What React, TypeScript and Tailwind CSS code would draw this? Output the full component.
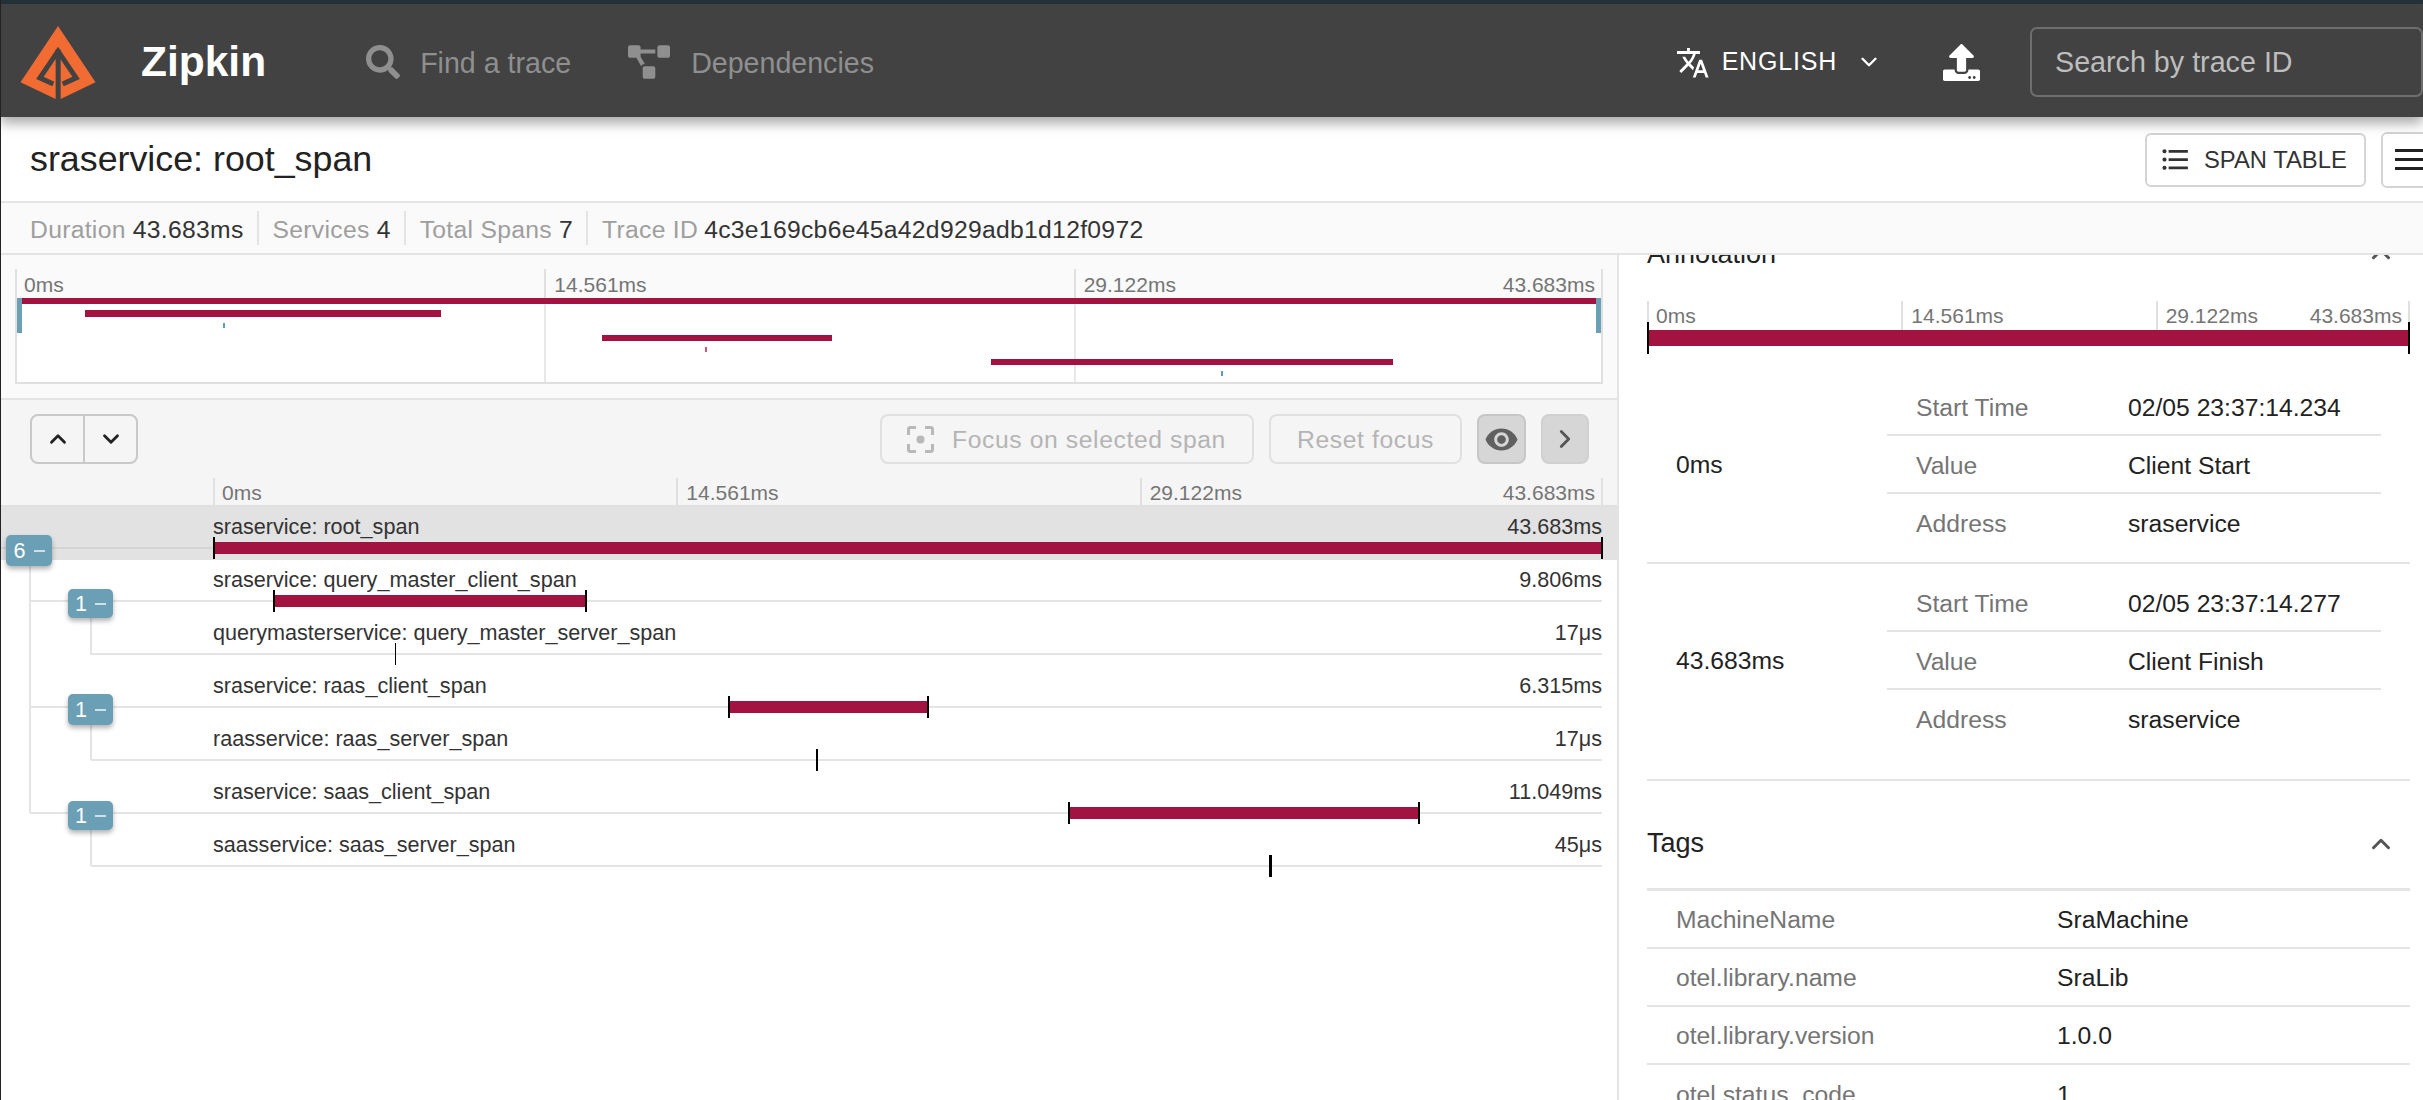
import React from "react";
import { FaSearch, FaProjectDiagram, FaUpload } from "react-icons/fa";
import { ChevronUp, ChevronDown, ChevronRight } from "lucide-react";

const Logo = () => (
  <svg width="76" height="73" viewBox="30 30 224 218" className="block">
    <polygon points="142,30 254,198 150,248 135,248 30,198" fill="#f26b32" />
    <polyline points="128,203 88,185 142,105 196,185 156,203" fill="none" stroke="#424242" strokeWidth="15" strokeMiterlimit="10" />
    <rect x="135" y="100" width="15" height="150" fill="#424242" />
  </svg>
);

const Translate = () => (
  <svg width="36" height="36" viewBox="1 2 23 21" fill="#fff" preserveAspectRatio="none" className="mt-[2px] h-[31px] w-[33px]">
    <path d="M12.87 15.07l-2.54-2.51.03-.03c1.74-1.94 2.98-4.17 3.71-6.53H17V4h-7V2H8v2H1v1.99h11.17C11.5 7.92 10.44 9.75 9 11.35 8.07 10.32 7.3 9.19 6.69 8h-2c.73 1.63 1.73 3.17 2.98 4.56l-5.09 5.02L4 19l5-5 3.11 3.11.76-2.04zM18.5 10h-2L12 22h2l1.12-3h4.75L21 22h2l-4.5-12zm-2.62 7l1.62-4.33L19.12 17h-3.24z" />
  </svg>
);

const ListIcon = () => (
  <svg viewBox="0 0 24 24" fill="#333" className="h-[33px] w-[33px]">
    <path d="M4 10.5c-.83 0-1.5.67-1.5 1.5s.67 1.5 1.5 1.5 1.5-.67 1.5-1.5-.67-1.5-1.5-1.5zm0-6c-.83 0-1.5.67-1.5 1.5S3.17 7.5 4 7.5 5.5 6.83 5.5 6 4.83 4.5 4 4.5zm0 12c-.83 0-1.5.68-1.5 1.5s.68 1.5 1.5 1.5 1.5-.68 1.5-1.5-.67-1.5-1.5-1.5zM7 19h14v-2H7v2zm0-6h14v-2H7v2zm0-8v2h14V5H7z" />
  </svg>
);

const FocusIcon = () => (
  <svg viewBox="3 3 18 18" fill="#b8b8b8" className="h-[27px] w-[27px]">
    <path d="M12 9.3a2.7 2.7 0 1 0 0 5.4 2.7 2.7 0 0 0 0-5.4zm-7 5.7H3v4c0 1.1.9 2 2 2h4v-2H5v-4zM5 5h4V3H5c-1.1 0-2 .9-2 2v4h2V5zm14-2h-4v2h4v4h2V5c0-1.1-.9-2-2-2zm0 16h-4v2h4c1.1 0 2-.9 2-2v-4h-2v4z" />
  </svg>
);

const EyeIcon = () => (
  <svg viewBox="0 0 24 24" fill="#606060" className="h-[35px] w-[35px]">
    <path d="M12 4.5C7 4.5 2.73 7.61 1 12c1.73 4.39 6 7.5 11 7.5s9.27-3.11 11-7.5c-1.73-4.39-6-7.5-11-7.5zM12 17c-2.76 0-5-2.24-5-5s2.24-5 5-5 5 2.24 5 5-2.24 5-5 5zm0-8c-1.66 0-3 1.34-3 3s1.34 3 3 3 3-1.34 3-3-1.34-3-3-3z" />
  </svg>
);

const Axis = ({ className }: { className: string }) => (
  <div className={`grid grid-cols-3 text-[21px] text-[#757575] ${className}`}>
    <div className="border-l-2 border-[#e0e0e0] pl-[7px]">0ms</div>
    <div className="border-l-2 border-[#e0e0e0] pl-[8px]">14.561ms</div>
    <div className="flex justify-between border-x-2 border-[#e0e0e0] pl-[8px] pr-[6px]">
      <span>29.122ms</span>
      <span>43.683ms</span>
    </div>
  </div>
);

const miniBars = [
  { x: 20, y: 298, w: 1578, h: 6, c: "#a31341" },
  { x: 85, y: 310, w: 356, h: 7, c: "#a31341" },
  { x: 223, y: 323, w: 2, h: 5, c: "#5a9bc0" },
  { x: 602, y: 335, w: 230, h: 6, c: "#a31341" },
  { x: 705, y: 347, w: 2, h: 5, c: "#c9567c" },
  { x: 991, y: 359, w: 402, h: 6, c: "#a31341" },
  { x: 1221, y: 371, w: 2, h: 5, c: "#5a9bc0" },
];

const Minimap = () => (
  <div className="relative h-[86px] border-x-2 border-b-2 border-[#e0e0e0] bg-white">
    <div className="absolute bottom-0 left-[527px] top-0 w-[2px] bg-[#e8e8e8]" />
    <div className="absolute bottom-0 left-[1057px] top-0 w-[2px] bg-[#e8e8e8]" />
    {miniBars.map((b, i) => (
      <div
        key={i}
        className="absolute"
        style={{ left: b.x - 17, top: b.y - 298, width: b.w, height: b.h, background: b.c }}
      />
    ))}
    <div className="absolute left-0 top-0 h-[35px] w-[5px] bg-[#6a9fb5]" />
    <div className="absolute right-0 top-0 h-[35px] w-[5px] bg-[#6a9fb5]" />
  </div>
);

type Row = {
  name: string;
  dur: string;
  lineClass: string;
  barX: number;
  barW: number;
  tickW: number;
};

const rows: Row[] = [
  { name: "sraservice: root_span", dur: "43.683ms", lineClass: "pl-[213px]", barX: 213, barW: 1390, tickW: 2 },
  { name: "sraservice: query_master_client_span", dur: "9.806ms", lineClass: "ml-[30px] pl-[183px]", barX: 273, barW: 314, tickW: 2 },
  { name: "querymasterservice: query_master_server_span", dur: "17μs", lineClass: "ml-[91px] pl-[122px]", barX: 395, barW: 0, tickW: 1 },
  { name: "sraservice: raas_client_span", dur: "6.315ms", lineClass: "ml-[30px] pl-[183px]", barX: 728, barW: 201, tickW: 2 },
  { name: "raasservice: raas_server_span", dur: "17μs", lineClass: "ml-[91px] pl-[122px]", barX: 816, barW: 0, tickW: 2 },
  { name: "sraservice: saas_client_span", dur: "11.049ms", lineClass: "ml-[30px] pl-[183px]", barX: 1068, barW: 352, tickW: 2 },
  { name: "saasservice: saas_server_span", dur: "45μs", lineClass: "ml-[91px] pl-[122px]", barX: 1269, barW: 0, tickW: 3 },
];

const Badge = ({ n, className }: { n: number; className: string }) => (
  <div
    className={`absolute flex items-center justify-center gap-[8px] rounded-[5px] bg-[#6a9fb5] text-[21.6px] leading-none text-white shadow-[0_3px_5px_rgba(0,0,0,0.3)] ${className}`}
  >
    <span>{n}</span>
    <span className="h-[2px] w-[11px] bg-[#cfe0e8]" />
  </div>
);

const SpanRow = ({ r, selected }: { r: Row; selected: boolean }) => (
  <div className={`relative h-[53px] ${selected ? "bg-[#e2e2e2]" : ""}`}>
    <div
      className={`mr-[15px] flex h-[42px] items-start justify-between border-b-2 pt-[6px] text-[21.6px] leading-[27px] text-[#333] ${
        selected ? "border-[#d4d4d4]" : "border-[#e4e4e4]"
      } ${r.lineClass}`}
    >
      <span>{r.name}</span>
      <span>{r.dur}</span>
    </div>
    {r.barW > 0 && (
      <div className="absolute top-[35px] h-[12px] bg-[#a31341]" style={{ left: r.barX, width: r.barW }} />
    )}
    <div className="absolute top-[30px] h-[22px] bg-black" style={{ left: r.barX, width: r.tickW }} />
    {r.barW > 0 && (
      <div
        className="absolute top-[30px] h-[22px] bg-black"
        style={{ left: r.barX + r.barW - r.tickW, width: r.tickW }}
      />
    )}
  </div>
);

const InfoRow = ({ k, v, last }: { k: string; v: string; last?: boolean }) => (
  <div className={`flex h-[58px] items-center ${last ? "pt-[1px]" : "border-b-2 border-[#e4e4e4] pt-[3px]"}`}>
    <div className="w-[241px] pl-[29px] text-[#757575]">{k}</div>
    <div className="text-[#222]">{v}</div>
  </div>
);

const AnnotationGroup = ({
  at,
  time,
  value,
  bordered,
}: {
  at: string;
  time: string;
  value: string;
  bordered?: boolean;
}) => (
  <div className={`flex items-center py-[10px] ${bordered ? "border-b-2 border-[#e4e4e4]" : ""}`}>
    <div className="w-[240px] pl-[29px] text-[#222]">{at}</div>
    <div className="w-[494px]">
      <InfoRow k="Start Time" v={time} />
      <InfoRow k="Value" v={value} />
      <InfoRow k="Address" v="sraservice" last />
    </div>
  </div>
);

const TagRow = ({ k, v, last }: { k: string; v: string; last?: boolean }) => (
  <div className={`flex h-[58px] items-center pt-[2px] ${last ? "" : "border-b-2 border-[#e4e4e4]"}`}>
    <div className="w-[410px] pl-[29px] text-[#757575]">{k}</div>
    <div className="text-[#222]">{v}</div>
  </div>
);

export default function App() {
  return (
    <div className="relative h-[1100px] w-[2423px] overflow-hidden bg-white font-['Liberation_Sans',Arial,sans-serif] text-[24.7px]">
      <div className="h-[4px] bg-[#26323a]" />
      <header className="relative z-10 flex h-[113px] items-center bg-[#424242] pt-[3px] shadow-[0_6px_12px_rgba(0,0,0,0.35)]">
        <div className="ml-[20px]">
          <Logo />
        </div>
        <div className="ml-[45px] text-[42.5px] font-bold leading-none text-white">Zipkin</div>
        <FaSearch className="ml-[100px] h-[34px] w-[34px] text-[#8f8f8f]" />
        <div className="ml-[20px] mt-[2px] text-[28.6px] text-[#8f8f8f]">Find a trace</div>
        <FaProjectDiagram className="ml-[57px] h-[36px] w-[42px] text-[#8f8f8f]" />
        <div className="ml-[21px] mt-[2px] text-[28.6px] text-[#8f8f8f]">Dependencies</div>
        <div className="ml-auto flex items-center">
          <Translate />
          <div className="ml-[12px] text-[25px] tracking-[0.8px] text-white">ENGLISH</div>
          <ChevronDown className="ml-[19px] h-[26px] w-[26px] text-white" strokeWidth={2.2} />
          <FaUpload className="ml-[61px] h-[37px] w-[37px] text-white" />
          <div className="ml-[50px] flex h-[70px] w-[393px] items-center rounded-[7px] border-2 border-[#6e6e6e] pl-[23px] pt-[2px] text-[28.7px] text-[#bdbdbd]">
            Search by trace ID
          </div>
        </div>
      </header>

      <div className="flex h-[86px] items-center justify-between border-b-2 border-[#e4e4e4] pl-[30px] pt-[1px]">
        <div className="text-[35.8px] text-[#222]">sraservice: root_span</div>
        <div className="flex items-center gap-[15px]">
          <div className="flex h-[54px] w-[221px] items-center gap-[12px] rounded-[6px] border-2 border-[#d4d4d4] pl-[12px] text-[23.8px] text-[#333]">
            <ListIcon />
            <span>SPAN TABLE</span>
          </div>
          <div className="-mr-[20px] flex h-[56px] w-[62px] items-center rounded-[6px] border-2 border-[#d4d4d4] pl-[12px]">
            <div className="flex w-[40px] flex-col gap-[6px]">
              <div className="h-[3px] bg-[#222]" />
              <div className="h-[3px] bg-[#222]" />
              <div className="h-[3px] bg-[#222]" />
            </div>
          </div>
        </div>
      </div>

      <div className="flex h-[52px] items-center border-b-2 border-[#e4e4e4] bg-[#fafafa] pl-[16px] tracking-[0.3px] text-[#9e9e9e]">
        <div className="flex h-[34px] items-center border-r-2 border-[#e4e4e4] pl-[14px] pr-[13px] pt-[3px]">
          Duration<span className="ml-[7px] text-[#333]">43.683ms</span>
        </div>
        <div className="flex h-[34px] items-center border-r-2 border-[#e4e4e4] pl-[14px] pr-[13px] pt-[3px]">
          Services<span className="ml-[7px] text-[#333]">4</span>
        </div>
        <div className="flex h-[34px] items-center border-r-2 border-[#e4e4e4] pl-[14px] pr-[13px] pt-[3px]">
          Total Spans<span className="ml-[7px] text-[#333]">7</span>
        </div>
        <div className="flex h-[34px] items-center pl-[14px] pt-[3px]">
          Trace ID<span className="ml-[6px] text-[#333]">4c3e169cb6e45a42d929adb1d12f0972</span>
        </div>
      </div>

      <div className="flex h-[845px]">
        <div className="h-full w-[1619px] border-r-2 border-[#e4e4e4]">
          <div className="border-b-2 border-[#e4e4e4] bg-[#fafafa] pb-[14px] pl-[15px] pr-[14px] pt-[14px]">
            <Axis className="h-[29px] leading-[32px]" />
            <Minimap />
          </div>
          <div className="border-b-2 border-[#e0e0e0] bg-[#f5f5f5]">
            <div className="flex items-center pl-[30px] pr-[28px] pt-[14px]">
              <div className="flex h-[50px] w-[108px] rounded-[8px] border-2 border-[#c9c9c9] text-[#222]">
                <div className="flex flex-1 items-center justify-center border-r-2 border-[#c9c9c9]">
                  <ChevronUp className="h-[26px] w-[26px]" strokeWidth={2.6} />
                </div>
                <div className="flex flex-1 items-center justify-center">
                  <ChevronDown className="h-[26px] w-[26px]" strokeWidth={2.6} />
                </div>
              </div>
              <div className="ml-auto flex h-[50px] w-[374px] items-center gap-[18px] rounded-[8px] border-2 border-[#e0e0e0] pl-[25px] tracking-[0.6px] text-[#b4b4b4]">
                <FocusIcon />
                <span className="pt-[2px]">Focus on selected span</span>
              </div>
              <div className="ml-[15px] flex h-[50px] w-[193px] items-center justify-center rounded-[8px] border-2 border-[#e0e0e0] pt-[2px] tracking-[0.6px] text-[#b4b4b4]">
                Reset focus
              </div>
              <div className="ml-[15px] flex h-[50px] w-[49px] items-center justify-center rounded-[8px] border-2 border-[#c6c6c6] bg-[#d6d6d6]">
                <EyeIcon />
              </div>
              <div className="ml-[15px] flex h-[50px] w-[48px] items-center justify-center rounded-[8px] border-2 border-[#d0d0d0] bg-[#d6d6d6]">
                <ChevronRight className="h-[30px] w-[30px] text-[#555]" strokeWidth={2.2} />
              </div>
            </div>
            <div className="mt-[14px] pl-[213px] pr-[14px]">
              <Axis className="h-[27px] leading-[29px]" />
            </div>
          </div>
          <div className="relative">
            {rows.map((r, i) => (
              <SpanRow key={r.name} r={r} selected={i === 0} />
            ))}
            <div className="absolute left-[29px] top-[59px] h-[247px] w-[2px] bg-[#e4e4e4]" />
            <div className="absolute left-[90px] top-[111px] h-[37px] w-[2px] bg-[#e4e4e4]" />
            <div className="absolute left-[90px] top-[218px] h-[35px] w-[2px] bg-[#e4e4e4]" />
            <div className="absolute left-[90px] top-[323px] h-[36px] w-[2px] bg-[#e4e4e4]" />
            <Badge n={6} className="left-[6px] top-[28px] h-[31px] w-[46px]" />
            <Badge n={1} className="left-[68px] top-[82px] h-[29px] w-[45px]" />
            <Badge n={1} className="left-[68px] top-[187px] h-[31px] w-[45px]" />
            <Badge n={1} className="left-[68px] top-[294px] h-[29px] w-[45px]" />
          </div>
        </div>

        <div className="h-full flex-1 overflow-hidden pl-[28px] pr-[13px]">
          <div className="-mt-[50px]">
            <div className="flex h-[96px] items-center justify-between pr-[14px] pt-[2px] text-[27px] text-[#222]">
              <span>Annotation</span>
              <ChevronUp className="h-[30px] w-[30px] text-[#555]" strokeWidth={2.4} />
            </div>
            <div className="relative h-[67px]">
              <Axis className="h-[29px] leading-[29px]" />
              <div className="relative h-[16px] bg-[#a31341]">
                <div className="absolute -top-[8px] left-0 h-[32px] w-[2px] bg-black" />
                <div className="absolute -top-[8px] right-0 h-[32px] w-[2px] bg-black" />
              </div>
            </div>
            <AnnotationGroup at="0ms" time="02/05 23:37:14.234" value="Client Start" bordered />
            <AnnotationGroup at="43.683ms" time="02/05 23:37:14.277" value="Client Finish" />
            <div className="border-b-2 border-[#e4e4e4] pb-[21px]" />
            <div className="flex h-[110px] items-center justify-between border-b-[3px] border-[#e4e4e4] pr-[14px] pt-[18px] text-[27px] text-[#222]">
              <span>Tags</span>
              <ChevronUp className="h-[30px] w-[30px] text-[#555]" strokeWidth={2.4} />
            </div>
            <TagRow k="MachineName" v="SraMachine" />
            <TagRow k="otel.library.name" v="SraLib" />
            <TagRow k="otel.library.version" v="1.0.0" />
            <TagRow k="otel.status_code" v="1" last />
          </div>
        </div>
      </div>
      <div className="absolute bottom-0 left-0 top-0 z-20 w-px bg-[#222]" />
    </div>
  );
}
